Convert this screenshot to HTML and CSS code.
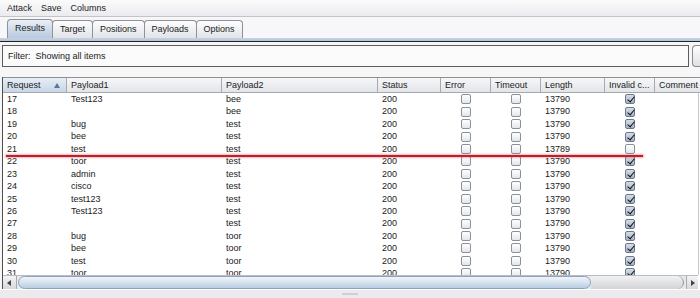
FILE: index.html
```html
<!DOCTYPE html>
<html lang="en">
<head>
  <meta charset="UTF-8" />
  <title>Intruder attack 1</title>
  <link rel="stylesheet" href="styles.css">
</head>
<body>

  <div class="menu-bar">
    <span>Attack</span>
    <span>Save</span>
    <span>Columns</span>
  </div>

  <div class="tab-bar">
    <div class="tab active">Results</div>
    <div class="tab">Target</div>
    <div class="tab">Positions</div>
    <div class="tab">Payloads</div>
    <div class="tab">Options</div>
  </div>
  <div class="tab-line"></div>

  <div class="filter-row">
    <div class="filter-box">Filter:&nbsp; Showing all items</div>
    <div class="filter-btn"></div>
  </div>

  <div class="results">
    <div class="cols head">
      <div class="th sorted">Request <span class="sort-arrow"></span></div>
      <div class="th">Payload1</div>
      <div class="th">Payload2</div>
      <div class="th">Status</div>
      <div class="th">Error</div>
      <div class="th">Timeout</div>
      <div class="th">Length</div>
      <div class="th">Invalid c...</div>
      <div class="th">Comment</div>
    </div>

    <div class="rows">
      <div class="cols row"><div>17</div><div>Test123</div><div>bee</div><div>200</div><div class="c"><span class="cb"></span></div><div class="c"><span class="cb"></span></div><div>13790</div><div class="c"><span class="cb on"></span></div><div></div></div>
      <div class="cols row"><div>18</div><div></div><div>bee</div><div>200</div><div class="c"><span class="cb"></span></div><div class="c"><span class="cb"></span></div><div>13790</div><div class="c"><span class="cb on"></span></div><div></div></div>
      <div class="cols row"><div>19</div><div>bug</div><div>test</div><div>200</div><div class="c"><span class="cb"></span></div><div class="c"><span class="cb"></span></div><div>13790</div><div class="c"><span class="cb on"></span></div><div></div></div>
      <div class="cols row"><div>20</div><div>bee</div><div>test</div><div>200</div><div class="c"><span class="cb"></span></div><div class="c"><span class="cb"></span></div><div>13790</div><div class="c"><span class="cb on"></span></div><div></div></div>
      <div class="cols row"><div>21</div><div>test</div><div>test</div><div>200</div><div class="c"><span class="cb"></span></div><div class="c"><span class="cb"></span></div><div>13789</div><div class="c"><span class="cb"></span></div><div></div></div>
      <div class="cols row"><div>22</div><div>toor</div><div>test</div><div>200</div><div class="c"><span class="cb"></span></div><div class="c"><span class="cb"></span></div><div>13790</div><div class="c"><span class="cb on"></span></div><div></div></div>
      <div class="cols row"><div>23</div><div>admin</div><div>test</div><div>200</div><div class="c"><span class="cb"></span></div><div class="c"><span class="cb"></span></div><div>13790</div><div class="c"><span class="cb on"></span></div><div></div></div>
      <div class="cols row"><div>24</div><div>cisco</div><div>test</div><div>200</div><div class="c"><span class="cb"></span></div><div class="c"><span class="cb"></span></div><div>13790</div><div class="c"><span class="cb on"></span></div><div></div></div>
      <div class="cols row"><div>25</div><div>test123</div><div>test</div><div>200</div><div class="c"><span class="cb"></span></div><div class="c"><span class="cb"></span></div><div>13790</div><div class="c"><span class="cb on"></span></div><div></div></div>
      <div class="cols row"><div>26</div><div>Test123</div><div>test</div><div>200</div><div class="c"><span class="cb"></span></div><div class="c"><span class="cb"></span></div><div>13790</div><div class="c"><span class="cb on"></span></div><div></div></div>
      <div class="cols row"><div>27</div><div></div><div>test</div><div>200</div><div class="c"><span class="cb"></span></div><div class="c"><span class="cb"></span></div><div>13790</div><div class="c"><span class="cb on"></span></div><div></div></div>
      <div class="cols row"><div>28</div><div>bug</div><div>toor</div><div>200</div><div class="c"><span class="cb"></span></div><div class="c"><span class="cb"></span></div><div>13790</div><div class="c"><span class="cb on"></span></div><div></div></div>
      <div class="cols row"><div>29</div><div>bee</div><div>toor</div><div>200</div><div class="c"><span class="cb"></span></div><div class="c"><span class="cb"></span></div><div>13790</div><div class="c"><span class="cb on"></span></div><div></div></div>
      <div class="cols row"><div>30</div><div>test</div><div>toor</div><div>200</div><div class="c"><span class="cb"></span></div><div class="c"><span class="cb"></span></div><div>13790</div><div class="c"><span class="cb on"></span></div><div></div></div>
      <div class="cols row"><div>31</div><div>toor</div><div>toor</div><div>200</div><div class="c"><span class="cb"></span></div><div class="c"><span class="cb"></span></div><div>13790</div><div class="c"><span class="cb on"></span></div><div></div></div>
    </div>

    <div class="hscroll">
      <div class="arrow left"></div>
      <div class="thumb"></div>
      <div class="track"></div>
      <div class="arrow right"></div>
    </div>

    <div class="marker"></div>
  </div>

  <div class="splitter"><span class="grip"></span></div>

</body>
</html>
```

FILE: styles.css
```css
* {
  box-sizing: border-box;
  margin: 0;
  padding: 0;
}
html, body {
  width: 700px;
  height: 298px;
  overflow: hidden;
  font-family: "Liberation Sans", Arial, sans-serif;
  font-size: 9px;
  color: #1a1a1a;
  background: #f6f6f7;
}
body {
  display: flex;
  flex-direction: column;
}

.menu-bar {
  display: flex;
  align-items: center;
  gap: 9px;
  height: 17px;
  padding-left: 7px;
  background: linear-gradient(#fbfbfc, #ebebef);
  border-bottom: 1px solid #c4c4c8;
  color: #222;
}

.tab-bar {
  display: flex;
  align-items: flex-end;
  height: 21px;
  padding-left: 7px;
  background: #f7f7f9;
}
.tab {
  height: 18px;
  line-height: 17px;
  padding: 0 7px;
  margin-right: -1px;
  border: 1px solid #8e9197;
  border-bottom: none;
  border-radius: 4px 4px 0 0;
  background: linear-gradient(#fdfdfe, #e2e4e8);
  color: #222;
}
.tab.active {
  height: 19px;
  background: linear-gradient(#e9eff7, #b8c9dd);
  position: relative;
  z-index: 1;
}
.tab-line {
  height: 4px;
  background: linear-gradient(#c5d3e4, #b4c4d8);
  border-bottom: 1px solid #222;
}

.filter-row {
  display: flex;
  align-items: center;
  height: 25px;
  padding: 3px 0 0 2px;
}
.filter-box {
  width: 691px;
  height: 22px;
  line-height: 20px;
  padding-left: 5px;
  border: 1px solid #5c5c5e;
  background: #fbfbfb;
}
.filter-btn {
  width: 8px;
  height: 22px;
  margin-left: 3px;
  border: 1px solid #8a8a8e;
  border-right: none;
  border-radius: 4px 0 0 4px;
  background: linear-gradient(#fdfdfd, #e0e0e4);
}

.results {
  position: relative;
  margin: 10px 0 0 2px;
  height: 212px;
  overflow: hidden;
  border-left: 1px solid #4e4e52;
  background: #fff;
}
.cols {
  display: grid;
  grid-template-columns: 64px 155px 156px 63px 50px 50px 64px 50px 80px;
}
.head {
  height: 16px;
  border-top: 1px solid #8d9096;
  border-bottom: 1px solid #a6aab0;
  background: linear-gradient(#f6f7f9, #e2e5e9);
}
.th {
  display: flex;
  align-items: center;
  justify-content: space-between;
  padding: 0 6px 0 4px;
  border-right: 1px solid #a6aab0;
  color: #222;
  white-space: nowrap;
}
.th.sorted {
  background: linear-gradient(#e7eef6, #c7d6e7);
}
.sort-arrow {
  width: 0;
  height: 0;
  border-left: 3px solid transparent;
  border-right: 3px solid transparent;
  border-bottom: 5px solid #5b7699;
}

.rows {
  height: 182px;
  overflow: hidden;
  border-right: 1px solid #c8c8cc;
  width: 696px;
}
.row {
  height: 12.45px;
  line-height: 12.45px;
}
.row > div {
  padding-left: 4px;
  white-space: nowrap;
}
.row > .c {
  display: flex;
  align-items: center;
  justify-content: center;
  padding: 0;
}
.cb {
  position: relative;
  width: 10px;
  height: 10px;
  border: 1px solid #8b9099;
  border-radius: 2px;
  background: linear-gradient(#ffffff, #e3e6ea);
}
.cb.on {
  background: linear-gradient(#d5dde9, #a3b2c8);
  border-color: #6f7887;
}
.cb.on::after {
  content: "";
  position: absolute;
  left: 3px;
  top: 0;
  width: 3px;
  height: 6px;
  border-right: 1.5px solid #111;
  border-bottom: 1.5px solid #111;
  transform: rotate(40deg);
}

.hscroll {
  display: flex;
  height: 14px;
  width: 695px;
  border-top: 1px solid #b9bcc2;
  background: #e9e9ec;
}
.arrow {
  position: relative;
  width: 14px;
  background: linear-gradient(#f4f4f6, #d6d8dc);
  border-right: 1px solid #a7abb1;
}
.arrow::after {
  content: "";
  position: absolute;
  top: 4px;
  border-top: 3px solid transparent;
  border-bottom: 3px solid transparent;
}
.arrow.left::after {
  left: 4px;
  border-right: 4px solid #444;
}
.arrow.right {
  width: 12px;
  border-right: none;
  border-left: 1px solid #a7abb1;
}
.arrow.right::after {
  left: 4px;
  border-left: 4px solid #444;
}
.thumb {
  width: 573px;
  margin-left: 1px;
  border: 1px solid #8ea3bd;
  border-radius: 7px;
  background: linear-gradient(#f1f5fa, #d6e2ef 50%, #bacde2);
}
.track {
  flex: 1;
  margin-right: 2px;
  border-radius: 0 7px 7px 0;
  border-right: 1px solid #909398;
  background: linear-gradient(#f2f2f3, #d3d4d8);
}

.marker {
  position: absolute;
  left: 3px;
  top: 78px;
  width: 637px;
  height: 2px;
  background: #bf1e2b;
  box-shadow: 0 0 2px 1px rgba(214, 90, 100, 0.45);
}

.splitter {
  flex: 1;
  display: flex;
  justify-content: center;
  align-items: center;
  border-top: 1px solid #fdfdfd;
  background: #ebebed;
}
.grip {
  width: 16px;
  height: 2px;
  background: #d0d0d4;
}
```
